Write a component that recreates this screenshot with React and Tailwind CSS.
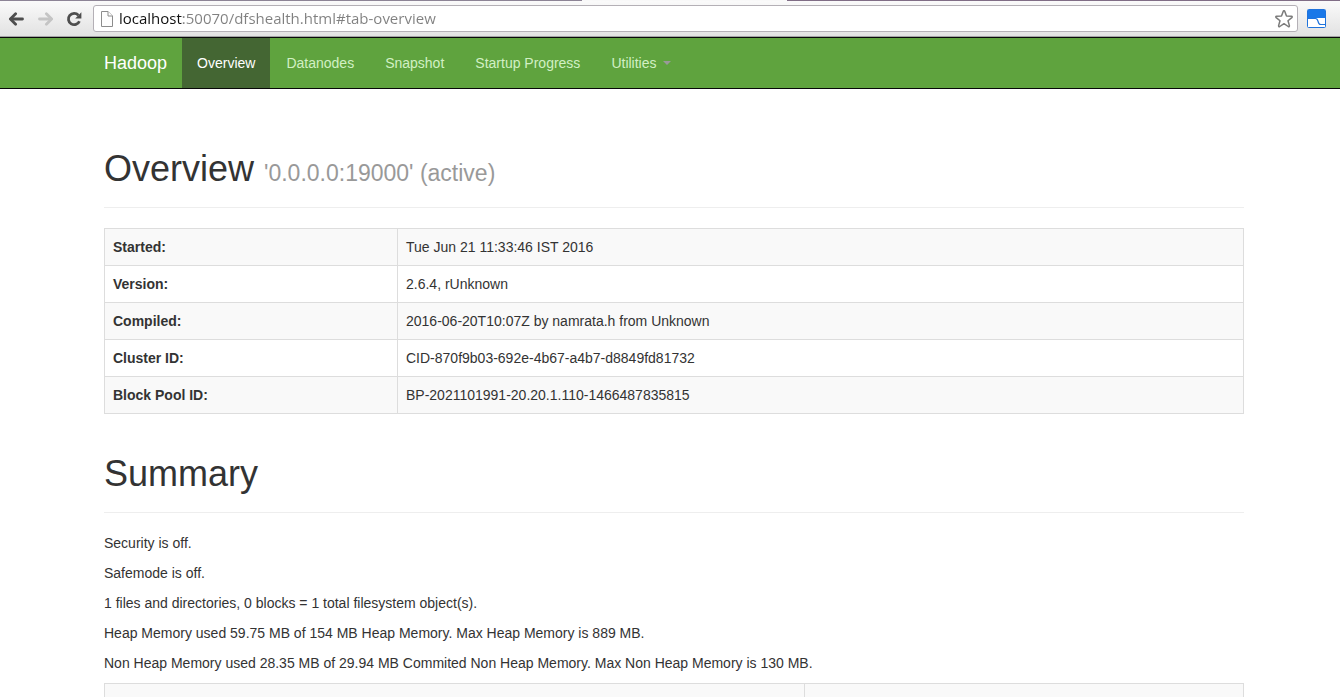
import { useState } from "react";

const navItems = ["Overview", "Datanodes", "Snapshot", "Startup Progress"];

const overviewRows = [
    { label: "Started:", value: "Tue Jun 21 11:33:46 IST 2016" },
    { label: "Version:", value: "2.6.4, rUnknown" },
    { label: "Compiled:", value: "2016-06-20T10:07Z by namrata.h from Unknown" },
    { label: "Cluster ID:", value: "CID-870f9b03-692e-4b67-a4b7-d8849fd81732" },
    { label: "Block Pool ID:", value: "BP-2021101991-20.20.1.110-1466487835815" },
];

const summaryLines = [
    "Security is off.",
    "Safemode is off.",
    "1 files and directories, 0 blocks = 1 total filesystem object(s).",
    "Heap Memory used 59.75 MB of 154 MB Heap Memory. Max Heap Memory is 889 MB.",
    "Non Heap Memory used 28.35 MB of 29.94 MB Commited Non Heap Memory. Max Non Heap Memory is 130 MB.",
];

function ArrowIcon({ className }) {
    return (
        <svg
            viewBox="0 0 16 14"
            className={className}
            fill="none"
            stroke="currentColor"
            strokeWidth="2.8"
            strokeLinecap="round"
            strokeLinejoin="round"
        >
            <path d="M14.5 7H3" />
            <path d="M7.6 1.8L2.4 7l5.200 5.200" />
        </svg>
    );
}

function ReloadIcon() {
    return (
        <svg viewBox="0 0 16 16" className="h-4 w-4">
            <path d="M12.4 4.2A5.7 5.7 0 1 0 13.4 10.2" fill="none" stroke="#4d4d4d" strokeWidth="2.8" />
            <path d="M15.4 1.2v6.200H9.200z" fill="#4d4d4d" />
        </svg>
    );
}

function PageIcon() {
    return (
        <svg viewBox="0 0 12 16" className="h-4 w-3 shrink-0" fill="#fdfdfd" stroke="#8c8c8c">
            <path d="M0.5 0.5H7L11.5 5V15.5H0.5z" />
            <path d="M7 0.5V5H11.5" />
        </svg>
    );
}

function StarIcon() {
    return (
        <svg viewBox="0 0 18 18" className="h-[18px] w-[18px]">
            <path
                d="M8.2 1.4q.8-1.4 1.6 0l1.7 4.7 4.9.2q1.4.3.4 1.3L13 10.8l1.4 4.8q.1 1.4-1.2.9L9 13.7l-4.2 2.8q-1.3.5-1.2-.9L5 10.8 1.200 7.600q-1-1 .4-1.300l4.900-.2z"
                fill="#fff"
                stroke="#7b7b7b"
                strokeWidth="1.5"
                strokeLinejoin="round"
            />
        </svg>
    );
}

function ExtensionIcon() {
    return (
        <svg viewBox="0 0 19 19" className="h-[19px] w-[19px]">
            <rect x="0.5" y="0.5" width="18" height="18" rx="1" fill="#fff" stroke="#1f73dc" />
            <path d="M1 1h17v8H1z" fill="#1a78e8" />
            <path d="M1 9.5h7.500c1.800 0 2.200 1.400 2.600 3 .4 1.800 1 3 2.600 3H18" fill="none" stroke="#1f73dc" strokeWidth="1.2" />
        </svg>
    );
}

function BrowserToolbar() {
    const [url, setUrl] = useState("localhost:50070/dfshealth.html#tab-overview");

    return (
        <div className="shrink-0">
            {/* bottom edge of the tab strip */}
            <div className="flex h-px">
                <div className="w-[582px] bg-[#8d8496]" />
                <div className="w-[205px] bg-[#f8f8f8]" />
                <div className="flex-1 bg-[#806d86]" />
            </div>
            <div className="flex h-9 items-center border-b border-[#a3a3a3] bg-linear-to-b from-[#fafafa] to-[#e2e2e2] pr-[14px] pl-2">
                <button type="button" aria-label="Back" className="text-[#4d4d4d]">
                    <ArrowIcon className="h-[14px] w-4" />
                </button>
                <button type="button" aria-label="Forward" disabled className="ml-[14px] text-[#c4c4c4]">
                    <ArrowIcon className="h-[14px] w-4 rotate-180" />
                </button>
                <button type="button" aria-label="Reload" className="ml-3">
                    <ReloadIcon />
                </button>
                <div className="ml-[11px] flex h-[27px] flex-1 items-center rounded-[3px] border border-[#b4b0b6] bg-white pr-1 pl-[7px]">
                    <PageIcon />
                    {/* host part is darker than the rest of the address */}
                    <input
                        type="text"
                        aria-label="Address"
                        value={url}
                        onChange={(e) => setUrl(e.target.value)}
                        spellCheck={false}
                        className="ml-[6px] h-6 min-w-0 flex-1 bg-linear-to-r from-[#111] from-[64px] to-[#808080] to-[64px] bg-clip-text pb-[2px] font-['Open_Sans','Noto_Sans',sans-serif] text-[15px] text-transparent caret-black outline-none"
                    />
                    <button type="button" aria-label="Bookmark this page">
                        <StarIcon />
                    </button>
                </div>
                <button type="button" aria-label="Extension" className="ml-[9px]">
                    <ExtensionIcon />
                </button>
            </div>
        </div>
    );
}

function Navbar() {
    return (
        <header className="shrink-0 border-y border-[#080808] bg-[#5fa33e] pl-2">
            <nav className="mx-auto flex h-[50px] max-w-[1140px] items-stretch gap-px leading-5">
                <a href="#top" className="flex items-center pr-[14px] text-[18px] text-white">
                    Hadoop
                </a>
                {navItems.map((item, index) => (
                    <a
                        key={item}
                        href={`#tab-${item.toLowerCase().replace(" ", "-")}`}
                        className={`flex items-center px-[15px] ${index === 0 ? "bg-[#446633] text-white" : "text-[#d2f0c4]"}`}
                    >
                        {item}
                    </a>
                ))}
                <button type="button" aria-haspopup="menu" className="flex items-center gap-[6px] px-[15px] text-[#d2f0c4]">
                    Utilities
                    <span className="border-x-4 border-t-4 border-x-transparent border-t-[#999]" />
                </button>
            </nav>
        </header>
    );
}

function PageHeader({ title, detail }) {
    return (
        <div className="mb-5 border-b border-[#eee] pb-[18px]">
            <h1 className="text-[36px] leading-10">
                {title} {detail && <small className="text-[23px] leading-6 text-[#999]">{detail}</small>}
            </h1>
        </div>
    );
}

export default function App() {
    return (
        <div className="flex h-screen flex-col overflow-hidden bg-white font-['Liberation_Sans',Arial,sans-serif] text-[14px] leading-5 text-[#333]">
            <BrowserToolbar />
            <Navbar />
            <main className="min-h-0 flex-1 overflow-hidden pt-[60px] pl-2">
                <div className="mx-auto max-w-[1140px]">
                    <PageHeader title="Overview" detail="'0.0.0.0:19000' (active)" />
                    <table className="w-full table-fixed border-collapse border border-[#ddd]">
                        <tbody>
                            {overviewRows.map((row) => (
                                <tr key={row.label} className="odd:bg-[#f9f9f9]">
                                    <th scope="row" className="w-[293px] border border-[#ddd] p-2 text-left font-bold">
                                        {row.label}
                                    </th>
                                    <td className="border border-[#ddd] p-2">{row.value}</td>
                                </tr>
                            ))}
                        </tbody>
                    </table>

                    <div className="mt-10">
                        <PageHeader title="Summary" />
                    </div>
                    {summaryLines.map((line) => (
                        <p key={line} className="mb-[10px]">
                            {line}
                        </p>
                    ))}
                    <table className="w-full table-fixed border-collapse border border-[#ddd]">
                        <tbody>
                            <tr className="h-[37px] bg-[#f9f9f9]">
                                <td className="w-[700px] border border-[#ddd]" />
                                <td className="border border-[#ddd]" />
                            </tr>
                        </tbody>
                    </table>
                </div>
            </main>
        </div>
    );
}
